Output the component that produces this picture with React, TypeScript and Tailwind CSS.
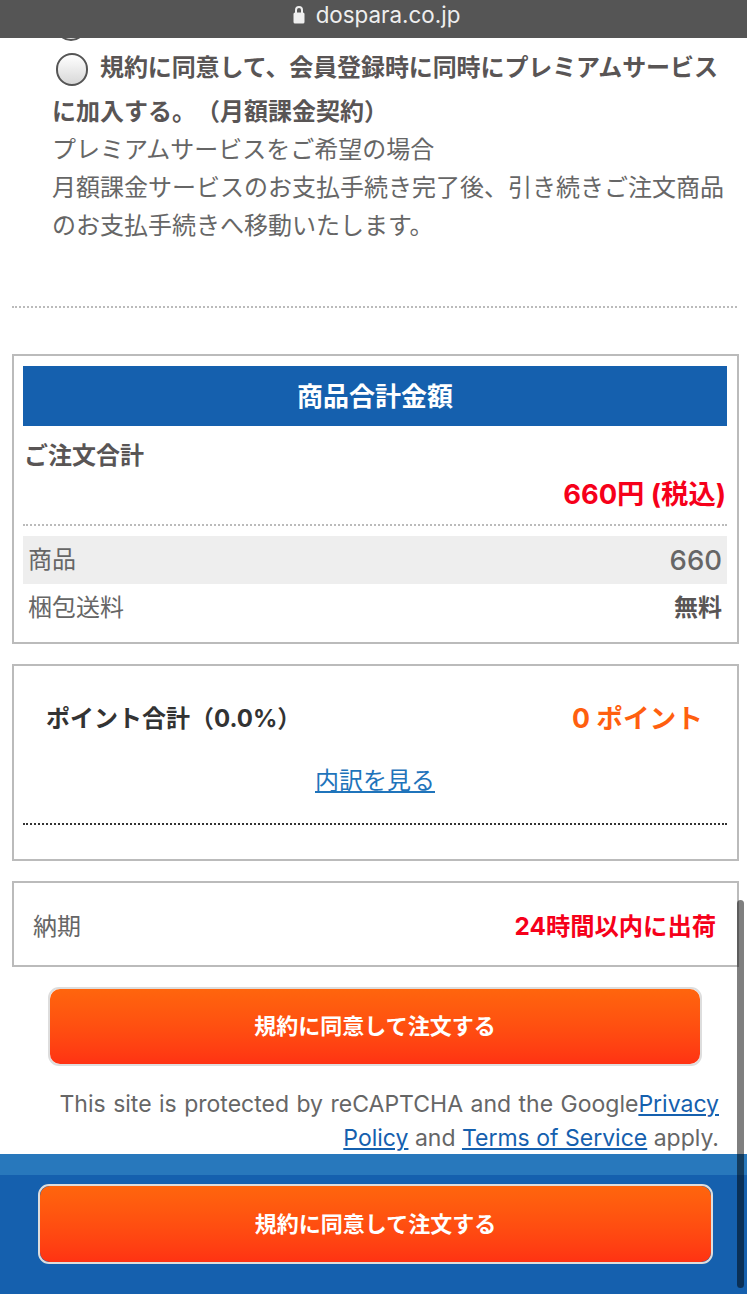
import * as React from "react"

function Radio({ className = "" }: { className?: string }) {
  return (
    <span
      className={`block h-[33px] w-[32px] shrink-0 rounded-full border-2 border-[#555] bg-gradient-to-b from-[#fff] to-[#d8d8d8] ${className}`}
    />
  )
}

function OrderButton({ className = "" }: { className?: string }) {
  return (
    <div
      className={`flex items-center justify-center rounded-[10px] bg-gradient-to-b from-[#ff650d] to-[#ff3213] text-[22px] font-bold text-white ${className}`}
    >
      規約に同意して注文する
    </div>
  )
}

export default function App() {
  return (
    <div
      className="relative flex h-[1294px] w-[747px] flex-col overflow-hidden bg-white text-[24px] text-[#666] [text-spacing-trim:space-all]"
      style={{ fontFamily: 'Inter, "Noto Sans CJK JP", "Noto Sans", sans-serif' }}
    >
      <div className="flex h-[38px] shrink-0 items-center justify-center gap-[11px] bg-[#555] pb-[9px] pl-[6px] text-[#eee]">
        <svg width="12" height="19" viewBox="0 0 12 19" fill="none">
          <path d="M3 8V5a3 3 0 0 1 6 0v3" stroke="#eee" strokeWidth="2" />
          <rect x="0.5" y="7.5" width="11" height="11" rx="1.5" fill="#eee" />
        </svg>
        <span className="text-[22.4px]">dospara.co.jp</span>
      </div>

      <div className="flex h-[4px] items-start overflow-hidden pl-[55px]">
        <Radio className="-mt-[30px]" />
      </div>

      <div className="pl-[52px] pr-[20px]">
        <div className="flex h-[51px] items-center font-bold text-[#595555]">
          <Radio className="ml-[4px] mr-[12px] mt-[4px]" />
          <span className="whitespace-nowrap tracking-[-0.1px]">規約に同意して、会員登録時に同時にプレミアムサービス</span>
        </div>
        <div className="h-[38px] font-bold leading-[38px] text-[#595555]">に加入する。（月額課金契約）</div>
        <div className="leading-[38px]">プレミアムサービスをご希望の場合</div>
        <div className="whitespace-nowrap leading-[38px]">月額課金サービスのお支払手続き完了後、引き続きご注文商品</div>
        <div className="leading-[38px]">のお支払手続きへ移動いたします。</div>
      </div>

      <div className="ml-[12px] mr-[10px] mt-[61px] border-t-2 border-dotted border-[#bbb]" />

      <div className="mx-[12px] mt-[46px] h-[290px] w-[727px] border-2 border-[#bbb] pl-[9px] pr-[10px] pt-[10px]">
        <div className="flex h-[60px] items-center justify-center bg-[#1560ae] text-[26px] font-bold text-white">
          商品合計金額
        </div>
        <div className="h-[39px] pl-[1px] pt-[10px] font-bold leading-[40px] text-[#595555]">ご注文合計</div>
        <div className="flex h-[47px] items-end justify-end pr-[1px] text-[27.3px] font-bold leading-[34px] text-[#f6001a]">
          660円 (税込)
        </div>
        <div className="mt-[12px] border-t-2 border-dotted border-[#bbb]" />
        <div className="mt-[10px] flex h-[48px] items-center justify-between bg-[#eee] px-[5px]">
          <span>商品</span>
          <span className="text-[27.5px] font-medium leading-[36px]">660</span>
        </div>
        <div className="flex h-[48px] items-center justify-between px-[5px]">
          <span>梱包送料</span>
          <span className="font-bold text-[#595555]">無料</span>
        </div>
      </div>

      <div className="mx-[12px] mt-[20px] h-[197px] w-[727px] border-2 border-[#bbb] pl-[9px] pr-[10px]">
        <div className="flex items-center justify-between pl-[23px] pr-[24px] pt-[33px]">
          <span className="font-bold text-[#333]">ポイント合計（0.0%）</span>
          <span className="text-[26.7px] font-bold leading-[39px] text-[#ff5f0f]">0 ポイント</span>
        </div>
        <div className="mt-[25px] text-center text-[#1f74bb] underline">内訳を見る</div>
        <div className="mt-[24px] border-t-2 border-dotted border-[#333]" />
      </div>

      <div className="mx-[12px] mt-[20px] flex h-[86px] w-[727px] items-center justify-between border-2 border-[#bbb] pl-[19px] pr-[21px] pt-[5px]">
        <span>納期</span>
        <span className="text-[24.3px] font-bold text-[#f6001a]">24時間以内に出荷</span>
      </div>

      <div className="ml-[48px] mr-[45px] mt-[20px] rounded-[11px] border-2 border-[#ddd]">
        <OrderButton className="h-[75px]" />
      </div>

      <div className="mr-[28px] mt-[21px] text-right text-[23px] leading-[34px]">
        <span className="[word-spacing:1px]">
          This site is protected by reCAPTCHA and the Google
          <a className="text-[#1560ae] underline">Privacy</a>
        </span>
        <br />
        <a className="text-[#1560ae] underline">Policy</a> and{" "}
        <a className="text-[#1560ae] underline">Terms of Service</a> apply.
      </div>

      <div className="absolute bottom-0 left-0 h-[140px] w-full bg-[#1560ae]">
        <div className="h-[21px] bg-[#2878bc]" />
        <div className="ml-[38px] mr-[34px] mt-[9px] rounded-[11px] border-2 border-[#ddd]">
          <OrderButton className="h-[76px]" />
        </div>
      </div>

      <div className="absolute right-[3px] top-[900px] h-[388px] w-[7px] rounded-full bg-black/50" />
    </div>
  )
}
